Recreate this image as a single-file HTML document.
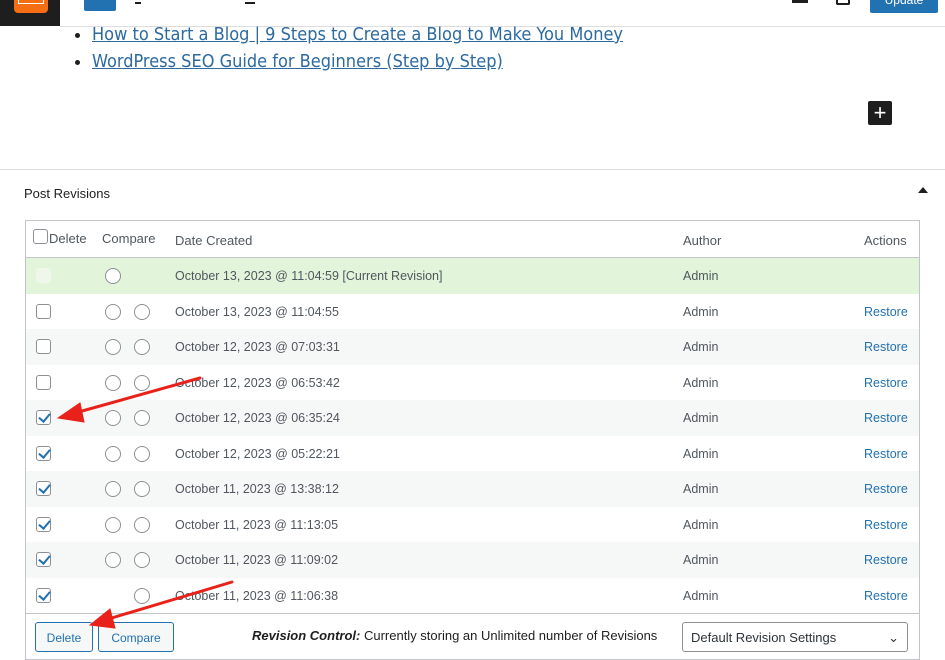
<!DOCTYPE html>
<html><head><style>
*{margin:0;padding:0;box-sizing:border-box}
body{width:945px;height:640px;overflow:hidden;background:#fff;font-family:"Liberation Sans",sans-serif;position:relative;color:#50575e}
.a{position:absolute}
.t{font-size:13px;color:#50575e}
.cb{position:absolute;width:15px;height:15px;border:1px solid #8c8f94;border-radius:3px;background:#fff}
.cb.c::after{content:"";position:absolute;left:4px;top:0px;width:5px;height:9px;border:solid #2271b1;border-width:0 2px 2px 0;transform:rotate(40deg)}
.r{position:absolute;width:16px;height:16px;border:1px solid #8c8f94;border-radius:50%;background:#fff}
a{color:#2271b1;text-decoration:underline}
</style></head><body>
<div class="a" style="left:0;top:0;width:60px;height:26px;background:#1e1e1e"></div>
<div class="a" style="left:14px;top:0;width:34px;height:13px;background:#f56e14;border-radius:0 0 4px 4px"></div>
<div class="a" style="left:18px;top:0;width:26px;height:4px;border:1px solid #fff;border-top:none"></div>
<div class="a" style="left:84px;top:0;width:32px;height:11px;background:#2271b1;border-radius:0 0 2px 2px"></div>
<div class="a" style="left:870px;top:0;width:68px;height:13px;background:#2271b1;border-radius:0 0 2px 2px;color:#fff;font-size:12px;text-align:center;line-height:1px">Update</div>
<div class="a" style="left:792px;top:0;width:16px;height:3px;background:#1e1e1e"></div>
<div class="a" style="left:836px;top:0;width:14px;height:5px;border:2px solid #1e1e1e;border-top:none;border-radius:0 0 2px 2px"></div>
<div class="a" style="left:135px;top:2px;width:6px;height:2px;background:#1e1e1e"></div>
<div class="a" style="left:245px;top:2px;width:10px;height:2px;background:#1e1e1e"></div>
<div class="a" style="left:60px;top:26px;width:885px;height:1px;background:#ddd"></div>
<ul class="a" style="left:92px;top:21px;font-size:18px;line-height:27px;color:#1e1e1e;font-family:'DejaVu Sans Condensed','Liberation Sans Narrow',sans-serif">
<li><a style="color:#2c6aa0">How to Start a Blog | 9 Steps to Create a Blog to Make You Money</a></li>
<li><a style="color:#2c6aa0">WordPress SEO Guide for Beginners (Step by Step)</a></li>
</ul>
<div class="a" style="left:868px;top:101px;width:24px;height:24px;background:#1e1e1e;border-radius:2px;color:#fff;font-size:22px;text-align:center;line-height:24px">+</div>
<div class="a" style="left:0;top:169px;width:945px;height:1px;background:#ddd"></div>
<div class="a t" style="left:24px;top:186px;font-size:13px;color:#1e1e1e">Post Revisions</div>
<div class="a" style="left:918px;top:187px;border:5px solid transparent;border-bottom:6px solid #1e1e1e;border-top:none"></div>
<div class="a" style="left:25px;top:220px;width:895px;height:440px;border:1px solid #c3c4c7"></div>
<div class="a" style="left:26px;top:257px;width:893px;height:1px;background:#c3c4c7"></div>
<div class="cb" style="left:33px;top:229px"></div>
<div class="a t" style="left:49px;top:231px">Delete</div>
<div class="a t" style="left:102px;top:231px">Compare</div>
<div class="a t" style="left:175px;top:233px">Date Created</div>
<div class="a t" style="left:683px;top:233px">Author</div>
<div class="a t" style="left:864px;top:233px">Actions</div>
<div class="a" style="left:26px;top:613px;width:893px;height:1px;background:#c3c4c7"></div>
<div id="rows"></div>
<div class="a" style="left:35px;top:622px;width:58px;height:30px;border:1px solid #2271b1;border-radius:3px;background:#f6f7f7;color:#2271b1;font-size:12px;text-align:center;padding-top:8px">Delete</div>
<div class="a" style="left:98px;top:622px;width:76px;height:30px;border:1px solid #2271b1;border-radius:3px;background:#f6f7f7;color:#2271b1;font-size:12px;text-align:center;padding-top:8px">Compare</div>
<div class="a t" style="left:252px;top:628px;color:#1e1e1e"><i><b>Revision Control:</b></i> Currently storing an Unlimited number of Revisions</div>
<div class="a" style="left:682px;top:622px;width:226px;height:30px;border:1px solid #8c8f94;border-radius:3px;font-size:13px;color:#2c3338;padding:7px 8px">Default Revision Settings<span style="position:absolute;right:8px">&#8964;</span></div>
<script>
var d=[["October 13, 2023 @ 11:04:59 [Current Revision]",0],["October 13, 2023 @ 11:04:55",0],["October 12, 2023 @ 07:03:31",0],["October 12, 2023 @ 06:53:42",0],["October 12, 2023 @ 06:35:24",1],["October 12, 2023 @ 05:22:21",1],["October 11, 2023 @ 13:38:12",1],["October 11, 2023 @ 11:13:05",1],["October 11, 2023 @ 11:09:02",1],["October 11, 2023 @ 11:06:38",1]];
var h="";
d.forEach(function(r,i){var y=258+i*35.5;var bg=i==0?"#e2f4da":(i%2==0?"#f6f7f7":"#fff");
h+='<div class="a" style="left:26px;top:'+y+'px;width:893px;height:35.5px;background:'+bg+'"></div>';
if(i==0)h+='<div class="a" style="left:36px;top:'+(y+10)+'px;width:15px;height:15px;background:#eef7ea;border-radius:3px"></div>';
else h+='<div class="cb'+(r[1]?' c':'')+'" style="left:36px;top:'+(y+10)+'px"></div>';
if(i>0&&i<9)h+='<div class="r" style="left:105px;top:'+(y+10)+'px"></div>';
if(i!=0)h+='<div class="r" style="left:134px;top:'+(y+10)+'px"></div>';
else h+='<div class="r" style="left:105px;top:'+(y+10)+'px"></div>';
h+='<div class="a t" style="left:175px;top:'+(y+11)+'px;font-size:12.5px">'+r[0]+'</div>';
h+='<div class="a t" style="left:683px;top:'+(y+11)+'px;font-size:12.5px">Admin</div>';
if(i>0)h+='<div class="a t" style="left:864px;top:'+(y+11)+'px;font-size:12.5px;color:#2271b1">Restore</div>';});
document.getElementById("rows").innerHTML=h;
</script>
<svg class="a" style="left:0;top:0" width="945" height="640">
<g stroke="#e8221b" stroke-width="3" fill="#e8221b" stroke-linecap="round">
<line x1="200" y1="378" x2="75" y2="413"/><polygon points="58,418 80,403 84,422" stroke-width="1"/>
<line x1="232" y1="582" x2="105" y2="620"/><polygon points="90,625 110,609 115,628" stroke-width="1"/>
</g></svg>
</body></html>
